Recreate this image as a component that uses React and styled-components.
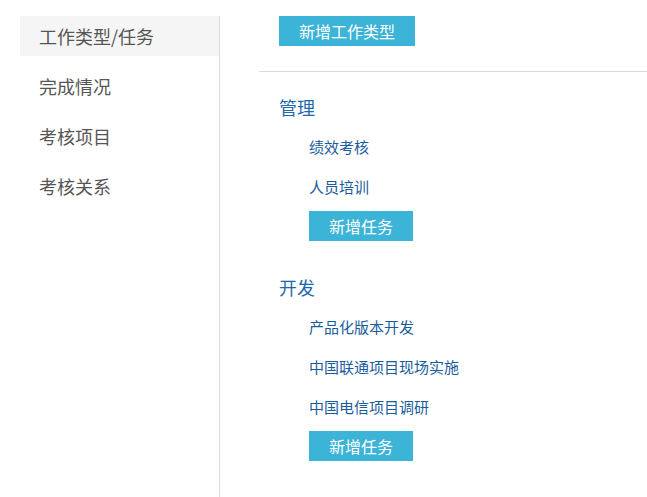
import React from "react";
import styled, { createGlobalStyle } from "styled-components";

const GlobalStyle = createGlobalStyle`
  html, body {
    margin: 0;
    padding: 0;
    background: #fff;
    font-family: "Noto Sans CJK SC", "Noto Sans", sans-serif;
  }
`;

const Page = styled.div`
  display: flex;
  padding: 16px 0 0 20px;
  min-height: 481px;
`;

const Sidebar = styled.ul`
  list-style: none;
  margin: 0;
  padding: 0;
  width: 199px;
  border-right: 1px solid #dcdcdc;
`;

const NavItem = styled.li`
  height: 40px;
  line-height: 40px;
  margin-bottom: 10px;
  padding-left: 19px;
  font-size: 18px;
  color: #555;
  background: ${props => (props.active ? "#f5f5f5" : "transparent")};
  cursor: pointer;
`;

const Main = styled.div`
  flex: 1;
  margin-left: 39px;
`;

const Toolbar = styled.div`
  padding: 0 0 25px 20px;
  border-bottom: 1px solid #dcdcdc;
`;

const Button = styled.button`
  height: 30px;
  padding: 0 20px;
  border: none;
  border-radius: 0;
  background: #3cb4d8;
  color: #fff;
  font-family: inherit;
  font-size: 16px;
  line-height: 30px;
  cursor: pointer;
`;

const Section = styled.div`
  padding: 15px 0 11px 20px;
`;

const SectionTitle = styled.div`
  height: 40px;
  line-height: 40px;
  font-size: 18px;
  color: #1f68ad;
`;

const TaskList = styled.div`
  padding-left: 30px;
`;

const Task = styled.div`
  height: 40px;
  line-height: 40px;
  font-size: 15px;
  color: #1a5c9c;
  cursor: pointer;
`;

const AddTask = styled(Button)`
  margin-top: 4px;
`;

const navItems = ["工作类型/任务", "完成情况", "考核项目", "考核关系"];

const types = [
  { name: "管理", tasks: ["绩效考核", "人员培训"] },
  { name: "开发", tasks: ["产品化版本开发", "中国联通项目现场实施", "中国电信项目调研"] }
];

export default function App() {
  return (
    <Page>
      <GlobalStyle />
      <Sidebar>
        {navItems.map((item, i) => (
          <NavItem key={item} active={i === 0}>
            {item}
          </NavItem>
        ))}
      </Sidebar>
      <Main>
        <Toolbar>
          <Button>新增工作类型</Button>
        </Toolbar>
        {types.map(type => (
          <Section key={type.name}>
            <SectionTitle>{type.name}</SectionTitle>
            <TaskList>
              {type.tasks.map(task => (
                <Task key={task}>{task}</Task>
              ))}
              <AddTask>新增任务</AddTask>
            </TaskList>
          </Section>
        ))}
      </Main>
    </Page>
  );
}
